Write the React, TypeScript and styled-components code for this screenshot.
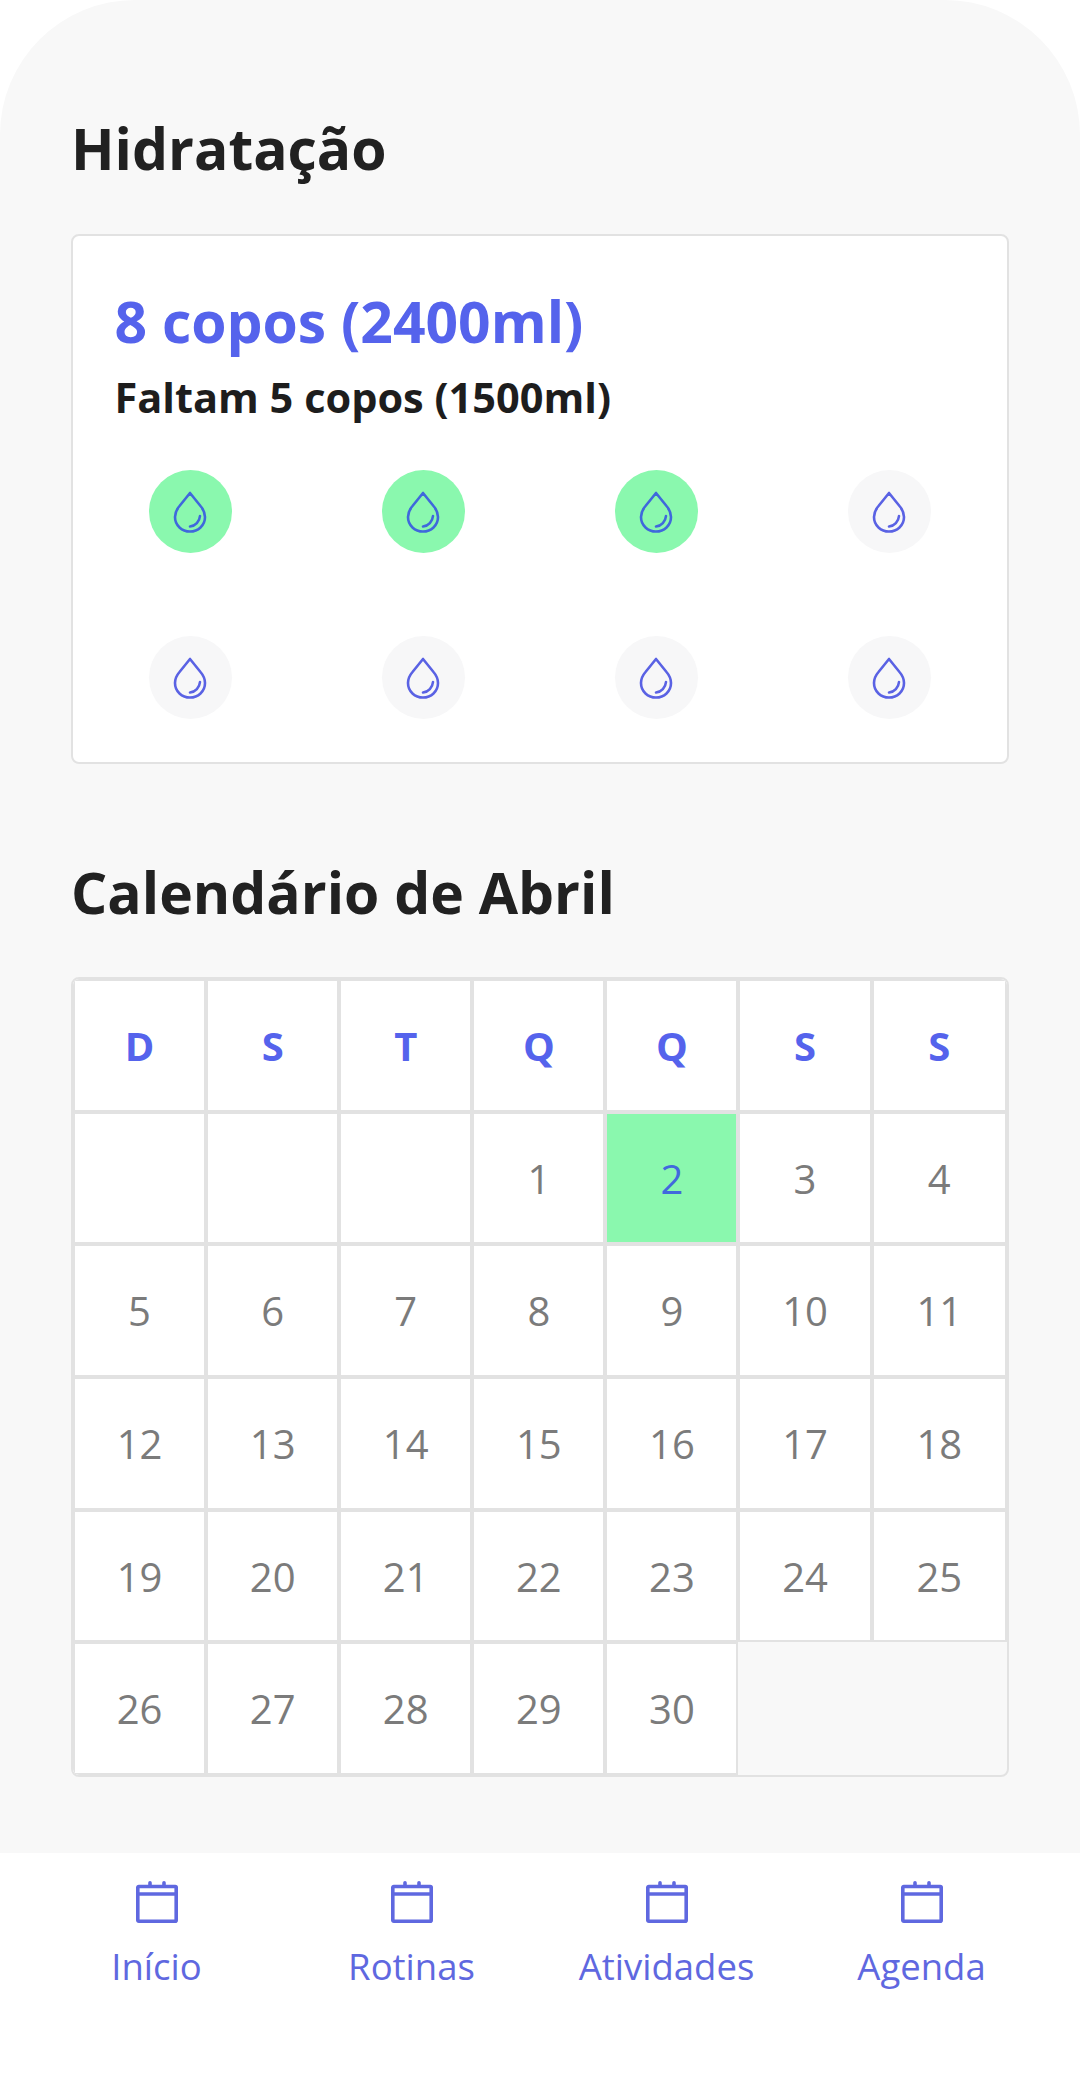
import React from 'react';
import styled, { createGlobalStyle } from 'styled-components';

const BLUE = '#5563ec';
const GREEN = '#8af8ae';
const LINE = '#e2e2e2';

const GlobalStyle = createGlobalStyle`
  html, body {
    margin: 0;
    padding: 0;
    background: #ffffff;
  }
  * {
    box-sizing: border-box;
  }
  body {
    font-family: 'Open Sans', 'Noto Sans', sans-serif;
  }
`;

const Page = styled.div`
  width: 1080px;
  height: 2082px;
  display: flex;
  flex-direction: column;
  overflow: hidden;
  background: #ffffff;
`;

const Main = styled.main`
  height: 1853px;
  padding: 116px 71px 0;
  background: #f8f8f8;
  border-radius: 135px 135px 0 0;
`;

const Heading = styled.h2<{ $gap: number }>`
  margin: 0 0 ${({ $gap }) => $gap}px;
  font-size: 57px;
  line-height: 64px;
  font-weight: 700;
  color: #212121;
`;

const Card = styled.section`
  height: 530px;
  margin-bottom: 96px;
  padding: 47px 0 0;
  background: #ffffff;
  border: 2.5px solid ${LINE};
  border-radius: 8px;
`;

const Total = styled.div`
  padding-left: 41.5px;
  font-size: 57px;
  line-height: 76px;
  font-weight: 700;
  color: ${BLUE};
`;

const Remaining = styled.div`
  margin-top: 11px;
  padding-left: 41.5px;
  font-size: 41.5px;
  line-height: 54px;
  font-weight: 700;
  color: #1d1d1d;
`;

const Cups = styled.div`
  margin-top: 46px;
  padding-left: 0.5px;
  display: grid;
  grid-template-columns: repeat(4, 233px);
  grid-auto-rows: 166px;
`;

const CupCell = styled.div`
  display: flex;
  justify-content: center;
`;

const Cup = styled.div<{ $filled: boolean }>`
  width: 83px;
  height: 83px;
  display: flex;
  align-items: center;
  justify-content: center;
  border-radius: 50%;
  background: ${({ $filled }) => ($filled ? GREEN : '#f7f7f8')};
  color: ${({ $filled }) => ($filled ? '#3f68dc' : '#5a62e4')};
`;

const Calendar = styled.section`
  display: grid;
  grid-template-columns: repeat(6, 133.1px) 1fr;
  grid-auto-rows: 132.7px;
  border: 2px solid ${LINE};
  border-radius: 8px;
  overflow: hidden;
`;

const Cell = styled.div<{ $header?: boolean; $today?: boolean }>`
  display: flex;
  align-items: center;
  justify-content: center;
  border: 2px solid ${LINE};
  background: ${({ $today }) => ($today ? GREEN : '#ffffff')};
  font-size: 40px;
  font-weight: ${({ $header }) => ($header ? 700 : 400)};
  color: ${({ $header, $today }) => ($today ? '#4169dd' : $header ? BLUE : '#7b7b7b')};
`;

const Nav = styled.nav`
  flex: 1;
  padding: 28px 29px 0;
  display: grid;
  grid-template-columns: repeat(4, 255px);
  align-items: start;
  background: #ffffff;
`;

const NavItem = styled.div`
  display: flex;
  flex-direction: column;
  align-items: center;
  color: #5f68e0;
`;

const NavLabel = styled.span`
  margin-top: 18px;
  font-size: 36.5px;
  line-height: 50px;
  font-weight: 400;
  white-space: nowrap;
`;

const DropIcon = () => (
  <svg width="34" height="42" viewBox="0 0 34 42" fill="none" stroke="currentColor" strokeWidth="2.6" strokeLinecap="round" strokeLinejoin="round">
    <path d="M17 2 L6.5 15 C3.5 18.5 2 22 2 26 C2 34.5 9 40.5 17 40.5 C25 40.5 32 34.5 32 26 C32 22 30.5 18.5 27.5 15 Z" />
    <path d="M27 25 C26.5 30.5 22.5 35 17 35.5" />
  </svg>
);

const CalendarIcon = () => (
  <svg width="42" height="42" viewBox="0 0 42 42" fill="none" stroke="currentColor" strokeWidth="3.6">
    <rect x="1.8" y="5.5" width="38.4" height="34.7" rx="1" />
    <path d="M1.8 13 H40.2" />
    <path d="M14 1.8 V5 M28 1.8 V5" strokeLinecap="round" />
  </svg>
);

const days = ['D', 'S', 'T', 'Q', 'Q', 'S', 'S'];
const blanks = [0, 1, 2];
const dates = Array.from({ length: 30 }, (_, i) => i + 1);
const cups = [true, true, true, false, false, false, false, false];
const tabs = ['Início', 'Rotinas', 'Atividades', 'Agenda'];

export default function App() {
  return (
    <Page>
      <GlobalStyle />
      <Main>
        <Heading $gap={54}>Hidratação</Heading>
        <Card>
          <Total>8 copos (2400ml)</Total>
          <Remaining>Faltam 5 copos (1500ml)</Remaining>
          <Cups>
            {cups.map((filled, i) => (
              <CupCell key={i}>
                <Cup $filled={filled}>
                  <DropIcon />
                </Cup>
              </CupCell>
            ))}
          </Cups>
        </Card>
        <Heading $gap={53}>Calendário de Abril</Heading>
        <Calendar>
          {days.map((d, i) => (
            <Cell key={i} $header>{d}</Cell>
          ))}
          {blanks.map((b) => (
            <Cell key={b} />
          ))}
          {dates.map((n) => (
            <Cell key={n} $today={n === 2}>{n}</Cell>
          ))}
        </Calendar>
      </Main>
      <Nav>
        {tabs.map((t) => (
          <NavItem key={t}>
            <CalendarIcon />
            <NavLabel>{t}</NavLabel>
          </NavItem>
        ))}
      </Nav>
    </Page>
  );
}
